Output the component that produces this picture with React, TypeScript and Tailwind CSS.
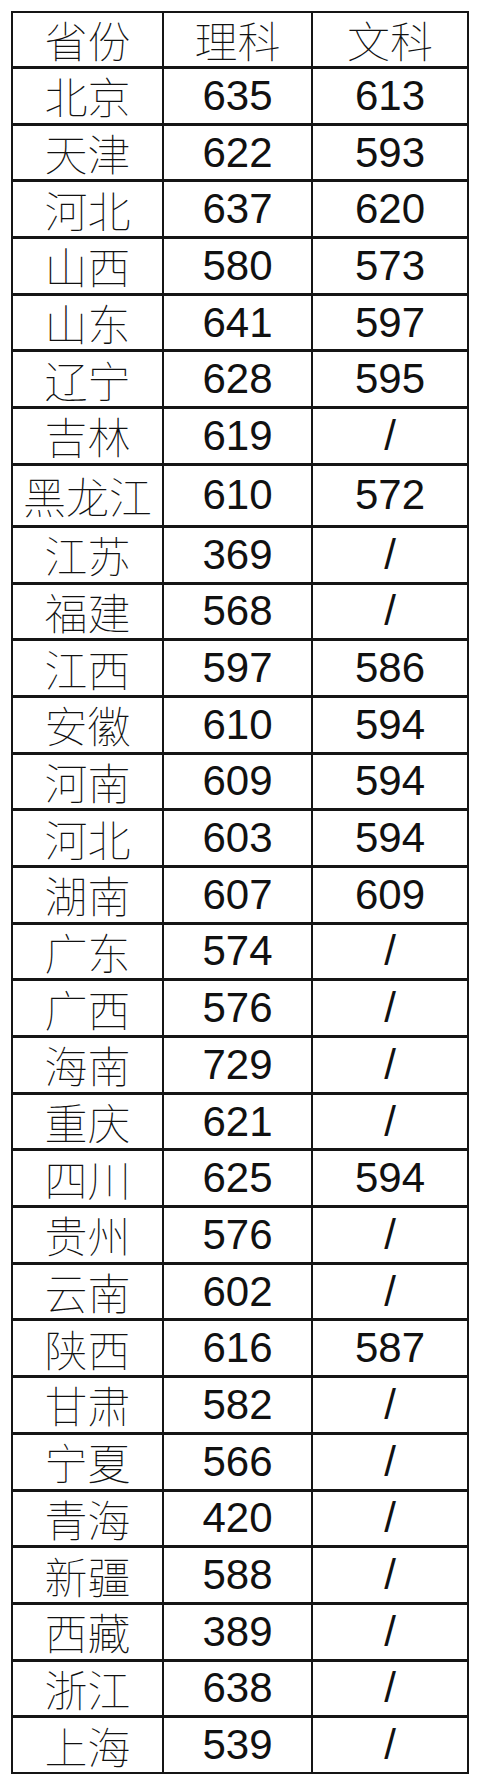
import React from "react";

type Row = { name: string; li: string; wen: string };

const rows: Row[] = [
  { name: "北京", li: "635", wen: "613" },
  { name: "天津", li: "622", wen: "593" },
  { name: "河北", li: "637", wen: "620" },
  { name: "山西", li: "580", wen: "573" },
  { name: "山东", li: "641", wen: "597" },
  { name: "辽宁", li: "628", wen: "595" },
  { name: "吉林", li: "619", wen: "/" },
  { name: "黑龙江", li: "610", wen: "572" },
  { name: "江苏", li: "369", wen: "/" },
  { name: "福建", li: "568", wen: "/" },
  { name: "江西", li: "597", wen: "586" },
  { name: "安徽", li: "610", wen: "594" },
  { name: "河南", li: "609", wen: "594" },
  { name: "河北", li: "603", wen: "594" },
  { name: "湖南", li: "607", wen: "609" },
  { name: "广东", li: "574", wen: "/" },
  { name: "广西", li: "576", wen: "/" },
  { name: "海南", li: "729", wen: "/" },
  { name: "重庆", li: "621", wen: "/" },
  { name: "四川", li: "625", wen: "594" },
  { name: "贵州", li: "576", wen: "/" },
  { name: "云南", li: "602", wen: "/" },
  { name: "陕西", li: "616", wen: "587" },
  { name: "甘肃", li: "582", wen: "/" },
  { name: "宁夏", li: "566", wen: "/" },
  { name: "青海", li: "420", wen: "/" },
  { name: "新疆", li: "588", wen: "/" },
  { name: "西藏", li: "389", wen: "/" },
  { name: "浙江", li: "638", wen: "/" },
  { name: "上海", li: "539", wen: "/" },
];

const cjk = "font-['Noto_Sans_CJK_SC',sans-serif] font-thin text-[43px] leading-none";
const num = "font-['Liberation_Sans',Arial,sans-serif] text-[42px] leading-none";

export default function App() {
  return (
    <div className="min-h-screen bg-white pt-[11px] px-[11px] text-[#111]">
      <div className="border-2 border-[#151515]">
        {/* header */}
        <div className="grid grid-cols-[151px_149px_1fr] h-[53px]">
          <div className={`flex items-center justify-center border-r-2 border-[#151515] ${cjk}`}>省份</div>
          <div className={`flex items-center justify-center border-r-2 border-[#151515] ${cjk}`}>理科</div>
          <div className={`flex items-center justify-center ${cjk}`}>文科</div>
        </div>

        {rows.map((r, i) => (
          <div
            key={i}
            className={`grid grid-cols-[151px_149px_1fr] border-t-[3px] border-[#151515] ${
              r.name.length > 2 ? "h-[62px]" : "h-[56.7px]"
            }`}
          >
            <div className={`flex items-center justify-center border-r-2 border-[#151515] ${cjk}`}>
              {r.name}
            </div>
            <div className={`flex items-center justify-center border-r-2 border-[#151515] ${num}`}>
              {r.li}
            </div>
            <div className={`flex items-center justify-center ${num}`}>{r.wen}</div>
          </div>
        ))}
      </div>
    </div>
  );
}
